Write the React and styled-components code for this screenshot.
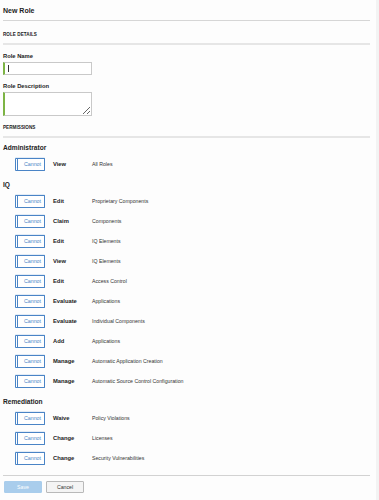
import React from "react";
import styled, { createGlobalStyle } from "styled-components";

const Global = createGlobalStyle`
  html, body { margin: 0; padding: 0; background: #f3f3f3; }
  body { font-family: "Liberation Sans", Arial, sans-serif; color: #222; }
  * { box-sizing: border-box; }
`;

const Page = styled.div`
  display: flex;
  min-height: 500px;
`;

const Main = styled.div`
  width: 376px;
  background: #fdfdfd;
  padding: 0 6px 0 3px;
  display: flex;
  flex-direction: column;
`;

const Title = styled.h1`
  margin: 0;
  height: 21px;
  padding-top: 1px;
  display: flex;
  align-items: center;
  font-size: 7px;
  font-weight: 700;
  border-bottom: 1px solid #d6d6d6;
`;

const SectionHead = styled.div`
  height: ${(p) => p.$h}px;
  display: flex;
  align-items: flex-end;
  padding-bottom: 4px;
  font-size: 4.6px;
  line-height: 8px;
  font-weight: 700;
  text-transform: uppercase;
  letter-spacing: 0.05px;
  border-bottom: 2px solid #e6e6e6;
`;

const Label = styled.label`
  display: block;
  margin-top: 7px;
  font-size: 5.8px;
  line-height: 8px;
  font-weight: 700;
`;

const FieldWrap = styled.div`
  position: relative;
  margin-top: 2px;
  width: 89px;
`;

const TextInput = styled.input`
  display: block;
  width: 89px;
  height: 13px;
  margin: 0;
  padding: 0 0 0 4px;
  border: 1px solid #c9c9c9;
  border-left: 2px solid #7db444;
  background: #fff;
  font: 5.5px "Liberation Sans", Arial, sans-serif;
  outline: none;
`;

const Caret = styled.span`
  position: absolute;
  left: 5px;
  top: 3px;
  width: 1px;
  height: 7px;
  background: #333;
`;

const TextArea = styled.textarea`
  display: block;
  width: 89px;
  height: 24px;
  margin: 2px 0 0;
  padding: 2px 4px;
  border: 1px solid #c9c9c9;
  border-left: 2px solid #7db444;
  background: #fff;
  font: 5.5px "Liberation Sans", Arial, sans-serif;
  outline: none;
`;

const GroupTitle = styled.h2`
  margin: ${(p) => p.$mt}px 0 0;
  height: 14px;
  display: flex;
  align-items: center;
  font-size: 6.6px;
  font-weight: 700;
`;

const Row = styled.div`
  height: 20px;
  display: flex;
  align-items: center;
  padding-left: 12px;
`;

const CannotButton = styled.button`
  width: 30px;
  height: 13px;
  margin: 0;
  padding: 0 0 0 3px;
  border: 1px solid #4a84c6;
  border-left: 3px double #4a84c6;
  border-radius: 1px;
  background: #fff;
  color: #4a84c6;
  font: 5.3px "Liberation Sans", Arial, sans-serif;
  box-shadow: 0 -1px 0 #e3ecf6;
`;

const Verb = styled.span`
  width: 39px;
  margin-left: 8px;
  font-size: 5.8px;
  font-weight: 700;
  color: #222;
`;

const Obj = styled.span`
  font-size: 5.2px;
  color: #333;
`;

const Footer = styled.div`
  margin-top: 7px;
  border-top: 1px solid #d2d2d2;
  padding-top: 5px;
  display: flex;
  gap: 4px;
  padding-left: 1px;
`;

const Btn = styled.button`
  width: 38px;
  height: 12px;
  margin: 0;
  padding: 0;
  border: 1px solid ${(p) => (p.$primary ? "#a9cdec" : "#b9b9b9")};
  border-radius: 1px;
  background: ${(p) => (p.$primary ? "#a9cdec" : "#f4f4f4")};
  color: ${(p) => (p.$primary ? "#fff" : "#333")};
  font: 5.2px "Liberation Sans", Arial, sans-serif;
`;

const groups = [
  {
    name: "Administrator",
    mt: 2,
    rows: [["View", "All Roles"]],
  },
  {
    name: "IQ",
    mt: 3,
    rows: [
      ["Edit", "Proprietary Components"],
      ["Claim", "Components"],
      ["Edit", "IQ Elements"],
      ["View", "IQ Elements"],
      ["Edit", "Access Control"],
      ["Evaluate", "Applications"],
      ["Evaluate", "Individual Components"],
      ["Add", "Applications"],
      ["Manage", "Automatic Application Creation"],
      ["Manage", "Automatic Source Control Configuration"],
    ],
  },
  {
    name: "Remediation",
    mt: 3,
    rows: [
      ["Waive", "Policy Violations"],
      ["Change", "Licenses"],
      ["Change", "Security Vulnerabilities"],
    ],
  },
];

export default function App() {
  return (
    <>
      <Global />
      <Page>
        <Main>
          <Title>New Role</Title>
          <SectionHead $h={24}>Role Details</SectionHead>
          <Label>Role Name</Label>
          <FieldWrap>
            <TextInput type="text" />
            <Caret />
          </FieldWrap>
          <Label>Role Description</Label>
          <TextArea />
          <SectionHead $h={22}>Permissions</SectionHead>
          {groups.map((g) => (
            <React.Fragment key={g.name}>
              <GroupTitle $mt={g.mt}>{g.name}</GroupTitle>
              {g.rows.map(([v, o], i) => (
                <Row key={i}>
                  <CannotButton type="button">Cannot</CannotButton>
                  <Verb>{v}</Verb>
                  <Obj>{o}</Obj>
                </Row>
              ))}
            </React.Fragment>
          ))}
          <Footer>
            <Btn $primary type="button">Save</Btn>
            <Btn type="button">Cancel</Btn>
          </Footer>
        </Main>
      </Page>
    </>
  );
}
